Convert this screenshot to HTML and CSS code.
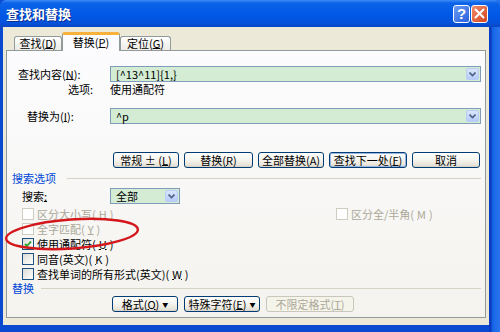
FILE: index.html
```html
<!DOCTYPE html>
<html lang="zh-CN">
<head>
    <meta charset="UTF-8">
    <title>查找和替换</title>
    <link rel="stylesheet" href="styles.css">
</head>
<body>
  <div class="window">
    <div class="titlebar">
      <span class="title">查找和替换</span>
      <span class="tb-btn tb-help">?</span>
      <span class="tb-btn tb-close">
        <svg width="11" height="11" viewBox="0 0 11 11"><path d="M1.5 1.5 L9.5 9.5 M9.5 1.5 L1.5 9.5" stroke="#fff" stroke-width="2" stroke-linecap="round"/></svg>
      </span>
    </div>

    <div class="client">
      <div class="tabs">
        <span class="tab tab-first">查找(<u>D</u>)</span>
        <span class="tab active">替换(<u>P</u>)</span>
        <span class="tab">定位(<u>G</u>)</span>
      </div>

      <div class="panel">
        <div class="row row-find">
          <span class="lbl lbl-find">查找内容(<u>N</u>):</span>
          <div class="combo">
            <span class="combo-text">[^13^11]{1,}</span>
            <span class="drop"><svg width="7" height="5" viewBox="0 0 7 5"><path d="M0.5 0.5 L3.5 3.5 L6.5 0.5" stroke="#4d6185" stroke-width="1.6" fill="none"/></svg></span>
          </div>
        </div>
        <div class="row row-opts">
          <span class="lbl lbl-opts">选项:</span>
          <span>使用通配符</span>
        </div>
        <div class="row row-repl">
          <span class="lbl lbl-repl">替换为(<u>I</u>):</span>
          <div class="combo">
            <span class="combo-text">^p</span>
            <span class="drop"><svg width="7" height="5" viewBox="0 0 7 5"><path d="M0.5 0.5 L3.5 3.5 L6.5 0.5" stroke="#4d6185" stroke-width="1.6" fill="none"/></svg></span>
          </div>
        </div>

        <div class="btn-row">
          <span class="btn w-less">常规 ± (<u>L</u>)</span>
          <span class="btn w-repl">替换(<u>R</u>)</span>
          <span class="btn w-all">全部替换(<u>A</u>)</span>
          <span class="btn btn-default w-next">查找下一处(<u>F</u>)</span>
          <span class="btn w-cancel">取消</span>
        </div>

        <div class="group-head"><span>搜索选项</span><i></i></div>

        <div class="row row-search">
          <span class="lbl lbl-search">搜索<u>:</u></span>
          <div class="combo combo-small">
            <span class="combo-text">全部</span>
            <span class="drop"><svg width="7" height="5" viewBox="0 0 7 5"><path d="M0.5 0.5 L3.5 3.5 L6.5 0.5" stroke="#4d6185" stroke-width="1.6" fill="none"/></svg></span>
          </div>
        </div>

        <div class="checks">
          <div class="check-row">
            <span class="check disabled"><b></b>区分大小写(<u>H</u>)</span>
            <span class="check disabled"><b></b>区分全/半角(<u>M</u>)</span>
          </div>
          <div class="check-row">
            <span class="check disabled"><b></b>全字匹配(<u>Y</u>)</span>
          </div>
          <div class="check-row">
            <span class="check"><b><svg width="8" height="8" viewBox="0 0 8 8"><path d="M1 4 L3 6 L7 1.5" stroke="#21a121" stroke-width="1.8" fill="none"/></svg></b>使用通配符(<u>U</u>)</span>
          </div>
          <div class="check-row">
            <span class="check"><b></b>同音(英文)(<u>K</u>)</span>
          </div>
          <div class="check-row">
            <span class="check"><b></b>查找单词的所有形式(英文)(<u>W</u>)</span>
          </div>
        </div>

        <div class="group-head group-repl"><span>替换</span><i></i></div>

        <div class="btn-row btn-row-bottom">
          <span class="btn w-fmt">格式(<u>O</u>) <small>▼</small></span>
          <span class="btn w-special">特殊字符(<u>E</u>) <small>▼</small></span>
          <span class="btn btn-disabled w-nofmt">不限定格式(<u>T</u>)</span>
        </div>
      </div>
    </div>

    <svg class="mark" width="150" height="50" viewBox="0 0 150 50">
      <ellipse cx="72" cy="24" rx="66" ry="14.5" transform="rotate(-4 72 24)" fill="none" stroke="#d3171b" stroke-width="2.4"/>
    </svg>
  </div>
</body>
</html>
```

FILE: styles.css
```css
* {
  box-sizing: border-box;
}
body {
  margin: 0;
  font-family: "Noto Sans CJK SC", "Noto Sans", sans-serif;
  font-size: 11px;
  line-height: 14px;
  color: #000;
}
u {
  text-decoration: underline;
  text-underline-offset: 0;
}

.window {
  position: relative;
  width: 500px;
  height: 332px;
  overflow: hidden;
  display: flex;
  flex-direction: column;
  background: linear-gradient(to right, #0a4ad0 0, #0a4ad0 489px, #0831b8 490px, #1667e8 493px, #2c74ec 100%);
}

/* title bar */
.titlebar {
  height: 27px;
  flex: none;
  display: flex;
  align-items: center;
  padding: 0 12px 0 6px;
  gap: 1px;
  background: linear-gradient(#3c8cf6 0, #0d63e8 3px, #0058e6 55%, #0552dc 85%, #0a46c2 100%);
  border-radius: 6px 6px 0 0;
}
.title {
  flex: 1;
  color: #fff;
  font-weight: bold;
  font-size: 13px;
  text-shadow: 1px 1px 0 #0a2a8a;
}
.tb-btn {
  width: 17px;
  height: 18px;
  border: 1px solid #fff;
  border-radius: 3px;
  display: flex;
  align-items: center;
  justify-content: center;
}
.tb-help {
  background: linear-gradient(135deg, #6b9cf4, #2a5fdc);
  color: #fff;
  font-family: "Liberation Sans", sans-serif;
  font-weight: bold;
  font-size: 15px;
}
.tb-close {
  background: linear-gradient(135deg, #f08c6c, #d5451f);
}

/* client area */
.client {
  flex: 1;
  margin: 0 11px 7px 3px;
  padding: 5px 3px 0 3px;
  background: #ece9d8;
}

.tabs {
  height: 18px;
  display: flex;
  align-items: flex-end;
  padding-left: 8px;
  position: relative;
  z-index: 1;
}
.tab {
  height: 14px;
  padding: 0;
  border: 1px solid #919b9c;
  border-bottom: none;
  border-radius: 3px 3px 0 0;
  background: linear-gradient(#fff, #ecebe5);
  line-height: 13px;
  white-space: nowrap;
  display: flex;
  align-items: center;
  justify-content: center;
}
.tab-first {
  width: 48px;
}
.tab.active {
  width: 58px;
  height: 19px;
  margin-bottom: -1px;
  background: #fcfcfe;
  border-top: 3px solid #f8b23c;
  padding-bottom: 2px;
}
.tab:last-child {
  width: 51px;
}

.panel {
  height: 268px;
  border: 1px solid #919b9c;
  background: linear-gradient(#fcfcfe, #f4f3ee);
  padding: 15px 4px 0 5px;
}

/* field rows */
.row {
  display: flex;
  align-items: center;
}
.lbl {
  width: 98px;
  flex: none;
}
.lbl-find {
  padding-left: 6px;
}
.lbl-opts {
  padding-left: 56px;
}
.lbl-repl {
  padding-left: 15px;
}
.lbl-search {
  padding-left: 10px;
}
.row-opts {
  height: 14px;
}
.row-repl {
  margin-top: 12px;
}
.row-search {
  margin-top: 3px;
}

.combo {
  flex: 1;
  height: 16px;
  border: 1px solid #7f9db9;
  background: #d3ecd3;
  display: flex;
  align-items: center;
  padding: 1px;
}
.combo-text {
  flex: 1;
  padding-left: 4px;
  line-height: 13px;
}
.combo-small {
  flex: none;
  width: 70px;
  height: 16px;
}
.drop {
  width: 13px;
  height: 12px;
  border: 1px solid #b7cbf4;
  border-radius: 2px;
  background: linear-gradient(#dbe6fd, #b6cbf8);
  display: flex;
  align-items: center;
  justify-content: center;
}

/* buttons */
.btn-row {
  display: flex;
  gap: 5px;
  margin-top: 28px;
  padding-left: 101px;
}
.btn {
  height: 16px;
  border: 1px solid #003c74;
  border-radius: 3px;
  background: linear-gradient(#fff 0, #f6f5f0 45%, #e8e5da 85%, #d6d0c5 100%);
  display: flex;
  align-items: center;
  justify-content: center;
  line-height: 13px;
  white-space: nowrap;
}
.btn small {
  font-size: 6px;
  margin-left: 3px;
}
.btn-default {
  box-shadow: inset 0 0 0 1px #97b6e6;
}
.btn-disabled {
  border-color: #c9c7ba;
  color: #aca899;
  background: #f5f4ea;
}
.w-less { width: 66px; }
.w-repl { width: 69px; }
.w-all { width: 66px; }
.w-next { width: 78px; }
.w-cancel { width: 68px; }
.w-fmt { width: 66px; }
.w-special { width: 76px; }
.w-nofmt { width: 88px; }

.btn-row-bottom {
  margin-top: 1px;
  padding-left: 100px;
  gap: 6px;
}

/* group headers */
.group-head {
  display: flex;
  align-items: center;
  height: 14px;
  margin-top: 3px;
  color: #0046d5;
}
.group-head i {
  flex: 1;
  margin-left: 11px;
  border-top: 1px solid #d6d3c6;
}
.group-repl {
  margin-top: 0;
}
.group-repl i {
  margin-left: 7px;
}

/* checkboxes */
.checks {
  margin-top: 2px;
  padding-left: 10px;
}
.check-row {
  height: 15px;
  display: grid;
  grid-template-columns: 314px 1fr;
  align-items: center;
}
.check {
  display: flex;
  align-items: center;
  gap: 3px;
}
.check b {
  width: 12px;
  height: 12px;
  border: 1px solid #1c5180;
  background: linear-gradient(135deg, #dcdcd7, #fff);
  display: flex;
  align-items: center;
  justify-content: center;
}
.check.disabled {
  color: #aca899;
}
.check.disabled b {
  border-color: #cfcdc1;
  background: #fff;
}

/* red annotation drawn over the dialog */
.mark {
  position: absolute;
  left: 0;
  top: 210px;
}
```
